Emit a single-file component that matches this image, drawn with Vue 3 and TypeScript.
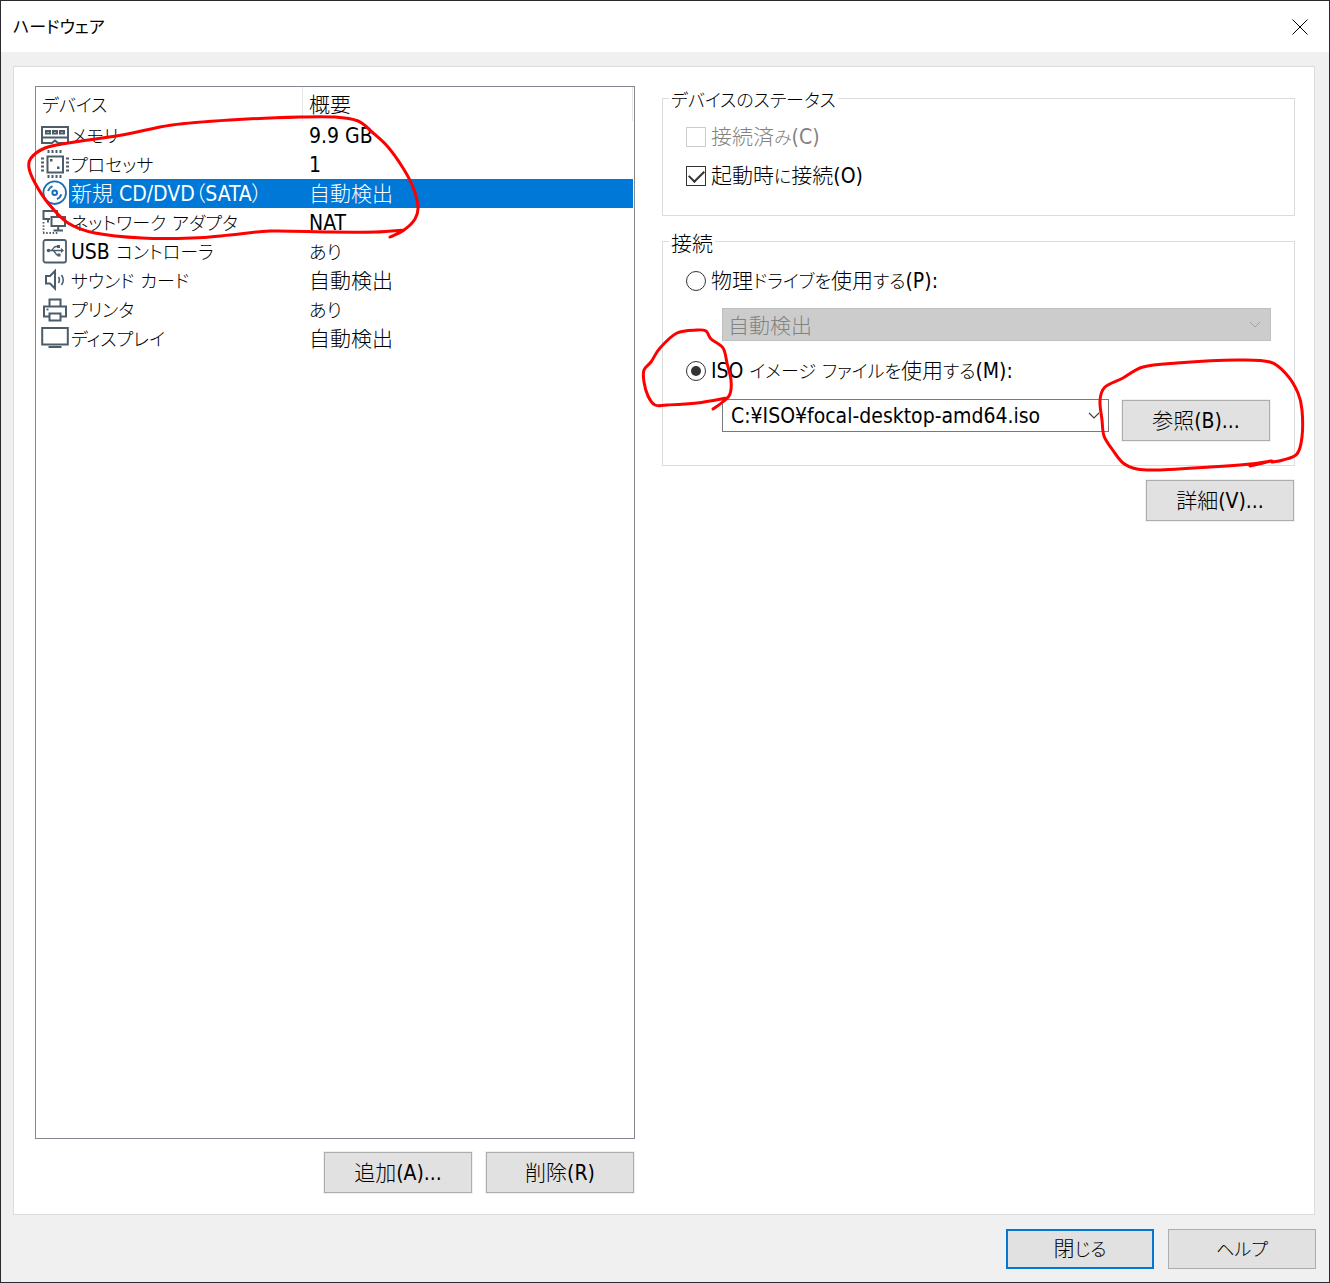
<script setup lang="ts">
import { h, ref } from 'vue'

type Point = [number, number]

interface Device {
  icon: string
  name: string
  summary: string
}

const devices: Device[] = [
  { icon: 'memory', name: 'メモリ', summary: '9.9 GB' },
  { icon: 'cpu', name: 'プロセッサ', summary: '1' },
  { icon: 'disc', name: '新規 CD/DVD（SATA）', summary: '自動検出' },
  { icon: 'network', name: 'ネットワーク アダプタ', summary: 'NAT' },
  { icon: 'usb', name: 'USB コントローラ', summary: 'あり' },
  { icon: 'sound', name: 'サウンド カード', summary: '自動検出' },
  { icon: 'printer', name: 'プリンタ', summary: 'あり' },
  { icon: 'display', name: 'ディスプレイ', summary: '自動検出' },
]

const selected = ref(2)
const connectAtPowerOn = ref(true)
const source = ref<'physical' | 'iso'>('iso')
const isoPath = ref('C:¥ISO¥focal-desktop-amd64.iso')

// Sets kana, kanji and Latin runs of a label in their own styles.
const Mixed = (props: { text: string }) =>
  h(
    'span',
    { class: 'mixed' },
    (props.text.match(/[\u3040-\u30ff]+|[\u4e00-\u9fff（）]+|[^\u3040-\u30ff\u4e00-\u9fff（）]+/g) ?? []).map((run) =>
      h('span', { class: /[\u3040-\u30ff]/.test(run) ? 'kana' : /[\u4e00-\u9fff（）]/.test(run) ? 'kanji' : 'latin' }, run),
    ),
  )
Mixed.props = ['text']

// Hand-drawn pen marks, as points joined by a smooth curve.
const marks: Point[][] = [
  [[390, 237], [404, 230], [415, 219], [418, 207], [413, 187], [403, 168], [388, 147], [372, 132], [358, 121],
   [335, 117], [300, 117], [230, 120], [172, 125], [122, 135], [68, 143], [45, 148], [31, 158], [29, 168],
   [35, 183], [48, 203], [68, 223], [95, 233], [142, 238], [192, 238], [230, 235], [270, 231], [330, 232], [375, 232], [404, 230]],
  [[713, 409], [724, 401], [730, 394], [731, 380], [727, 363], [723, 348], [711, 339], [706, 331], [697, 330],
   [677, 333], [660, 348], [651, 362], [644, 370], [644, 382], [648, 396], [655, 405], [667, 405], [697, 403], [727, 398]],
  [[1250, 466], [1272, 461], [1250, 464], [1210, 467], [1157, 470], [1137, 469], [1123, 463], [1112, 449],
   [1104, 436], [1102, 420], [1100, 400], [1105, 387], [1123, 378], [1143, 367], [1177, 363], [1237, 360],
   [1270, 362], [1287, 375], [1298, 393], [1302, 410], [1302, 437], [1297, 454], [1283, 460], [1272, 462]],
]

function smooth(p: Point[]): string {
  let d = `M${p[0][0]} ${p[0][1]}`
  for (let i = 0; i < p.length - 1; i++) {
    const a = p[Math.max(i - 1, 0)]
    const b = p[i]
    const c = p[i + 1]
    const e = p[Math.min(i + 2, p.length - 1)]
    d += `C${b[0] + (c[0] - a[0]) / 6} ${b[1] + (c[1] - a[1]) / 6} ${c[0] - (e[0] - b[0]) / 6} ${c[1] - (e[1] - b[1]) / 6} ${c[0]} ${c[1]}`
  }
  return d
}
</script>

<template>
  <div class="dialog">
    <header class="titlebar">
      <h1 class="title">ハードウェア</h1>
      <button class="close" type="button" aria-label="閉じる">
        <svg width="16" height="16" viewBox="0 0 16 16"><path d="M0.500 0.500l15 15M15.500 0.500l-15 15" fill="none" stroke="#000" /></svg>
      </button>
    </header>

    <main class="panel">
      <section class="left">
        <div class="list">
          <table class="devices">
            <thead>
              <tr><th class="name-col" scope="col"><Mixed text="デバイス" /></th><th scope="col"><Mixed text="概要" /></th></tr>
            </thead>
            <tbody>
              <tr v-for="(d, i) in devices" :key="d.icon" :class="{ selected: i === selected }" @click="selected = i">
                <td>
                  <div class="device">
                    <svg class="icon" width="30" height="29" viewBox="0 0 30 29" fill="none" stroke="#4b5d6b" stroke-width="1.8" aria-hidden="true">
                      <template v-if="d.icon === 'memory'">
                        <path d="M2 6h26v16H18l-3-2.500-3 2.500H2zM2 16.500h26" stroke-width="2" />
                        <path d="M6 10h4v2.500H6zM13 10h4v2.500h-4zM20 10h4v2.500h-4z" stroke-width="2" />
                      </template>
                      <template v-else-if="d.icon === 'cpu'">
                        <path d="M7.500 6.500h15.500v16H7.500z" stroke-width="2" />
                        <path d="M8.500 0v3M12.500 0v3M16.500 0v3M20.500 0v3M8.500 25v3M12.500 25v3M16.500 25v3M20.500 25v3M1 8.500h3M1 12.500h3M1 16.500h3M1 20.500h3M26 8.500h3M26 12.500h3M26 16.500h3M26 20.500h3" stroke-width="2" />
                        <path d="M10 9h2.500v2.500H10zM17 16.500h2.500V19H17z" fill="#4b5d6b" stroke="none" />
                      </template>
                      <template v-else-if="d.icon === 'disc'">
                        <g stroke="#1c6eb4">
                          <circle cx="14.700" cy="13.700" r="11.300" />
                          <circle cx="14.700" cy="13.700" r="2.300" stroke-width="2" />
                          <path d="M8 12c.7-2 2.200-3.800 4.500-4.800M21.400 15.400c-.7 2-2.200 3.800-4.500 4.800" stroke-width="2" />
                        </g>
                      </template>
                      <template v-else-if="d.icon === 'network'">
                        <path d="M10 11H3.500V3H17v5M11.500 9H25v9H11.500zM18.200 18v4M13.500 22.500h9.500M8 11v3.500" stroke-width="2" />
                        <path d="M3.500 14v10M3 25h16" stroke-dasharray="1.500 1.700" />
                      </template>
                      <template v-else-if="d.icon === 'usb'">
                        <rect x="3.500" y="3" width="22.500" height="22.500" rx="2" />
                        <path d="M8 13.500h13M10.500 13.500c3 0 2.500-4 5.500-4h1.500M12.500 13.500c3 0 2.500 4.500 5 4.500h1" stroke-width="1.400" />
                        <path d="M21 11l3 2.500-3 2.500zM17 8h3v3h-3zM17.500 16.500h3v3h-3z" fill="#4b5d6b" stroke="none" />
                        <circle cx="8.500" cy="13.500" r="1.800" fill="#4b5d6b" stroke="none" />
                      </template>
                      <template v-else-if="d.icon === 'sound'">
                        <path d="M6 10h4l5-5v17.500l-5-5H6z" stroke-width="2" />
                        <path d="M18.500 11q2 3 0 6M21.500 9q3.500 5 0 10" stroke-width="1.500" />
                      </template>
                      <template v-else-if="d.icon === 'printer'">
                        <path d="M9.500 11V4.500h11V11M9.500 21.500H4V11.500h22v10h-5.500M9.500 18.500h11v7h-11z" stroke-width="2" />
                        <path d="M6.500 14.500h2" />
                      </template>
                      <template v-else>
                        <path d="M2.200 4h25.600v16.500H2.200z" stroke-width="2" />
                        <path d="M8.500 23h13" stroke-width="2" />
                      </template>
                    </svg>
                    <span class="label"><Mixed :text="d.name" /></span>
                  </div>
                </td>
                <td class="summary"><Mixed :text="d.summary" /></td>
              </tr>
            </tbody>
          </table>
        </div>
        <div class="actions">
          <button class="btn" type="button"><Mixed text="追加(A)..." /></button>
          <button class="btn" type="button"><Mixed text="削除(R)" /></button>
        </div>
      </section>

      <section class="right">
        <fieldset class="group">
          <legend><Mixed text="デバイスのステータス" /></legend>
          <div class="checks">
            <label class="option disabled"><input type="checkbox" disabled /><Mixed text="接続済み(C)" /></label>
            <label class="option"><input v-model="connectAtPowerOn" type="checkbox" /><Mixed text="起動時に接続(O)" /></label>
          </div>
        </fieldset>

        <fieldset class="group">
          <legend><Mixed text="接続" /></legend>
          <div class="source">
            <label class="option"><input v-model="source" type="radio" name="source" value="physical" /><Mixed text="物理ドライブを使用する(P):" /></label>
            <div class="drive">
              <select disabled aria-label="物理ドライブ"><option>自動検出</option></select>
              <svg class="chevron" width="12" height="8" viewBox="0 0 12 8"><path d="M1 1l5 5 5-5" fill="none" stroke="#a0a0a0" /></svg>
            </div>
            <label class="option"><input v-model="source" type="radio" name="source" value="iso" /><Mixed text="ISO イメージ ファイルを使用する(M):" /></label>
            <div class="file">
              <div class="combo">
                <input v-model="isoPath" type="text" aria-label="ISO イメージ ファイル" />
                <button type="button" aria-label="一覧">
                  <svg width="12" height="8" viewBox="0 0 12 8"><path d="M1 1l5 5 5-5" fill="none" stroke="#404040" stroke-width="1.200" /></svg>
                </button>
              </div>
              <button class="btn" type="button"><Mixed text="参照(B)..." /></button>
            </div>
          </div>
        </fieldset>

        <button class="btn details" type="button"><Mixed text="詳細(V)..." /></button>
      </section>
    </main>

    <footer class="footer">
      <button class="btn default" type="button"><Mixed text="閉じる" /></button>
      <button class="btn" type="button"><Mixed text="ヘルプ" /></button>
    </footer>

    <svg class="marks" width="1330" height="520" viewBox="0 0 1330 520" aria-hidden="true">
      <path v-for="(m, i) in marks" :key="i" :d="smooth(m)" />
    </svg>
  </div>
</template>

<style>
body {
  background: #f0f0f0;
}
</style>

<style scoped>
* {
  box-sizing: border-box;
}

.dialog,
.dialog button,
.dialog input,
.dialog select {
  font-family: "DejaVu Sans Condensed", "Noto Sans CJK JP", sans-serif;
  font-size: 21px;
  font-weight: 400;
  font-feature-settings: "palt";
  color: #000;
}

.dialog {
  position: relative;
  display: flex;
  flex-direction: column;
  min-height: 100vh;
  border: 1px solid #2b2a30;
  background: #f0f0f0;
  line-height: 24px;
}

.dialog :deep(.kana),
.dialog :deep(.kanji) {
  font-family: "Noto Sans CJK JP", sans-serif;
  font-weight: 300;
  line-height: 20px;
}

.dialog :deep(.kana) {
  font-size: 18px;
}

.dialog :deep(.latin) {
  white-space: pre-wrap;
}

.titlebar {
  display: flex;
  align-items: center;
  justify-content: space-between;
  height: 51px;
  padding: 0 21px 0 12px;
  background: #fff;
}

.title {
  margin: 0;
  font-size: 17px;
  font-weight: 400;
}

.close {
  display: flex;
  padding: 0;
  border: 0;
  background: none;
}

.panel {
  display: flex;
  flex: 1;
  gap: 27px;
  margin: 14px 14px 0 12px;
  padding: 19px 19px 21px 21px;
  border: 1px solid #dcdcdc;
  background: #fff;
}

.left {
  display: flex;
  flex: 600 1 0;
  flex-direction: column;
  gap: 13px;
}

.list {
  flex: 1;
  padding-right: 1px;
  border: 1px solid #828790;
}

.devices {
  width: 100%;
  table-layout: fixed;
  border-spacing: 0;
}

th {
  height: 34px;
  padding: 2px 6px 0;
  border-right: 1px solid #e5e5e5;
  font-weight: 400;
  text-align: left;
}

.name-col {
  width: 267px;
}

td {
  height: 29px;
  padding: 0;
}

.device {
  display: flex;
  height: 29px;
  padding-left: 4px;
}

.icon {
  flex: none;
}

.label {
  flex: 1;
  margin-left: -1px;
  padding-left: 2px;
  line-height: 31px;
  white-space: nowrap;
}

.summary {
  padding-left: 6px;
}

.selected .label,
.selected .summary {
  background: #0078d7;
  color: #fff;
}

.actions,
.footer {
  display: flex;
  justify-content: flex-end;
  gap: 14px;
}

.actions {
  padding-right: 1px;
}

.right {
  display: flex;
  flex: 633 1 0;
  flex-direction: column;
  min-width: 0;
}

.group {
  min-width: 0;
  margin: 0 0 13px;
  padding: 0 23px;
  border: 1px solid #dcdcdc;
}

.group legend {
  height: 24px;
  margin-left: -17px;
  padding: 3px 2px 0;
  line-height: 20px;
}

.checks {
  display: flex;
  flex-direction: column;
  gap: 13px;
  padding: 14px 0 26px;
}

.option {
  display: flex;
  align-items: center;
  height: 26px;
  gap: 5px;
}

.option input {
  display: grid;
  place-content: center;
  width: 20px;
  height: 20px;
  margin: 0;
  border: 1px solid #333;
  background: #fff;
  appearance: none;
}

.option input[type="radio"] {
  border-radius: 50%;
}

.option input[type="radio"]:checked::before {
  width: 10px;
  height: 10px;
  border-radius: 50%;
  background: #333;
  content: "";
}

.option input[type="checkbox"]:checked::before {
  width: 13px;
  height: 7px;
  border: solid #333;
  border-width: 0 0 2px 2px;
  transform: translateY(-2px) rotate(-45deg);
  content: "";
}

.option.disabled {
  color: #838383;
}

.option.disabled input {
  border-color: #ccc;
}

.source {
  display: flex;
  flex-direction: column;
  padding: 15px 0 24px;
}

.drive {
  position: relative;
  margin: 14px 0 17px 36px;
}

.drive select {
  display: block;
  width: 100%;
  height: 33px;
  padding: 0 5px 2px;
  border: 1px solid #bfbfbf;
  border-radius: 0;
  background: #ccc;
  color: #838383;
  font-weight: 300;
  font-family: "Noto Sans CJK JP", sans-serif;
  opacity: 1;
  appearance: none;
}

.chevron {
  position: absolute;
  top: 13px;
  right: 10px;
}

.file {
  display: flex;
  align-items: flex-end;
  gap: 13px;
  height: 42px;
  margin: 15px 1px 0 36px;
}

.combo {
  display: flex;
  flex: 1;
  align-self: flex-start;
  height: 33px;
  border: 1px solid #7a7a7a;
  background: #fff;
}

.combo input {
  flex: 1;
  min-width: 0;
  padding: 0 0 0 8px;
  border: 0;
  background: none;
  outline: 0;
}

.combo button {
  display: flex;
  align-items: center;
  padding: 0 8px;
  border: 0;
  background: none;
}

.btn {
  flex: none;
  width: 148px;
  height: 41px;
  padding: 0;
  border: 1px solid #adadad;
  background: #e1e1e1;
  box-shadow: 0 0 0 1px #f0f0f0;
}

.details {
  align-self: flex-end;
  margin: 1px 1px 0 0;
}

.footer {
  padding: 14px 13px 13px;
}

.footer .btn {
  height: 40px;
}

.footer .default {
  border: 2px solid #0078d7;
}

.marks {
  position: absolute;
  top: -1px;
  left: -1px;
  pointer-events: none;
}

.marks path {
  fill: none;
  stroke: #f00;
  stroke-width: 3;
  stroke-linecap: round;
  stroke-linejoin: round;
}
</style>
